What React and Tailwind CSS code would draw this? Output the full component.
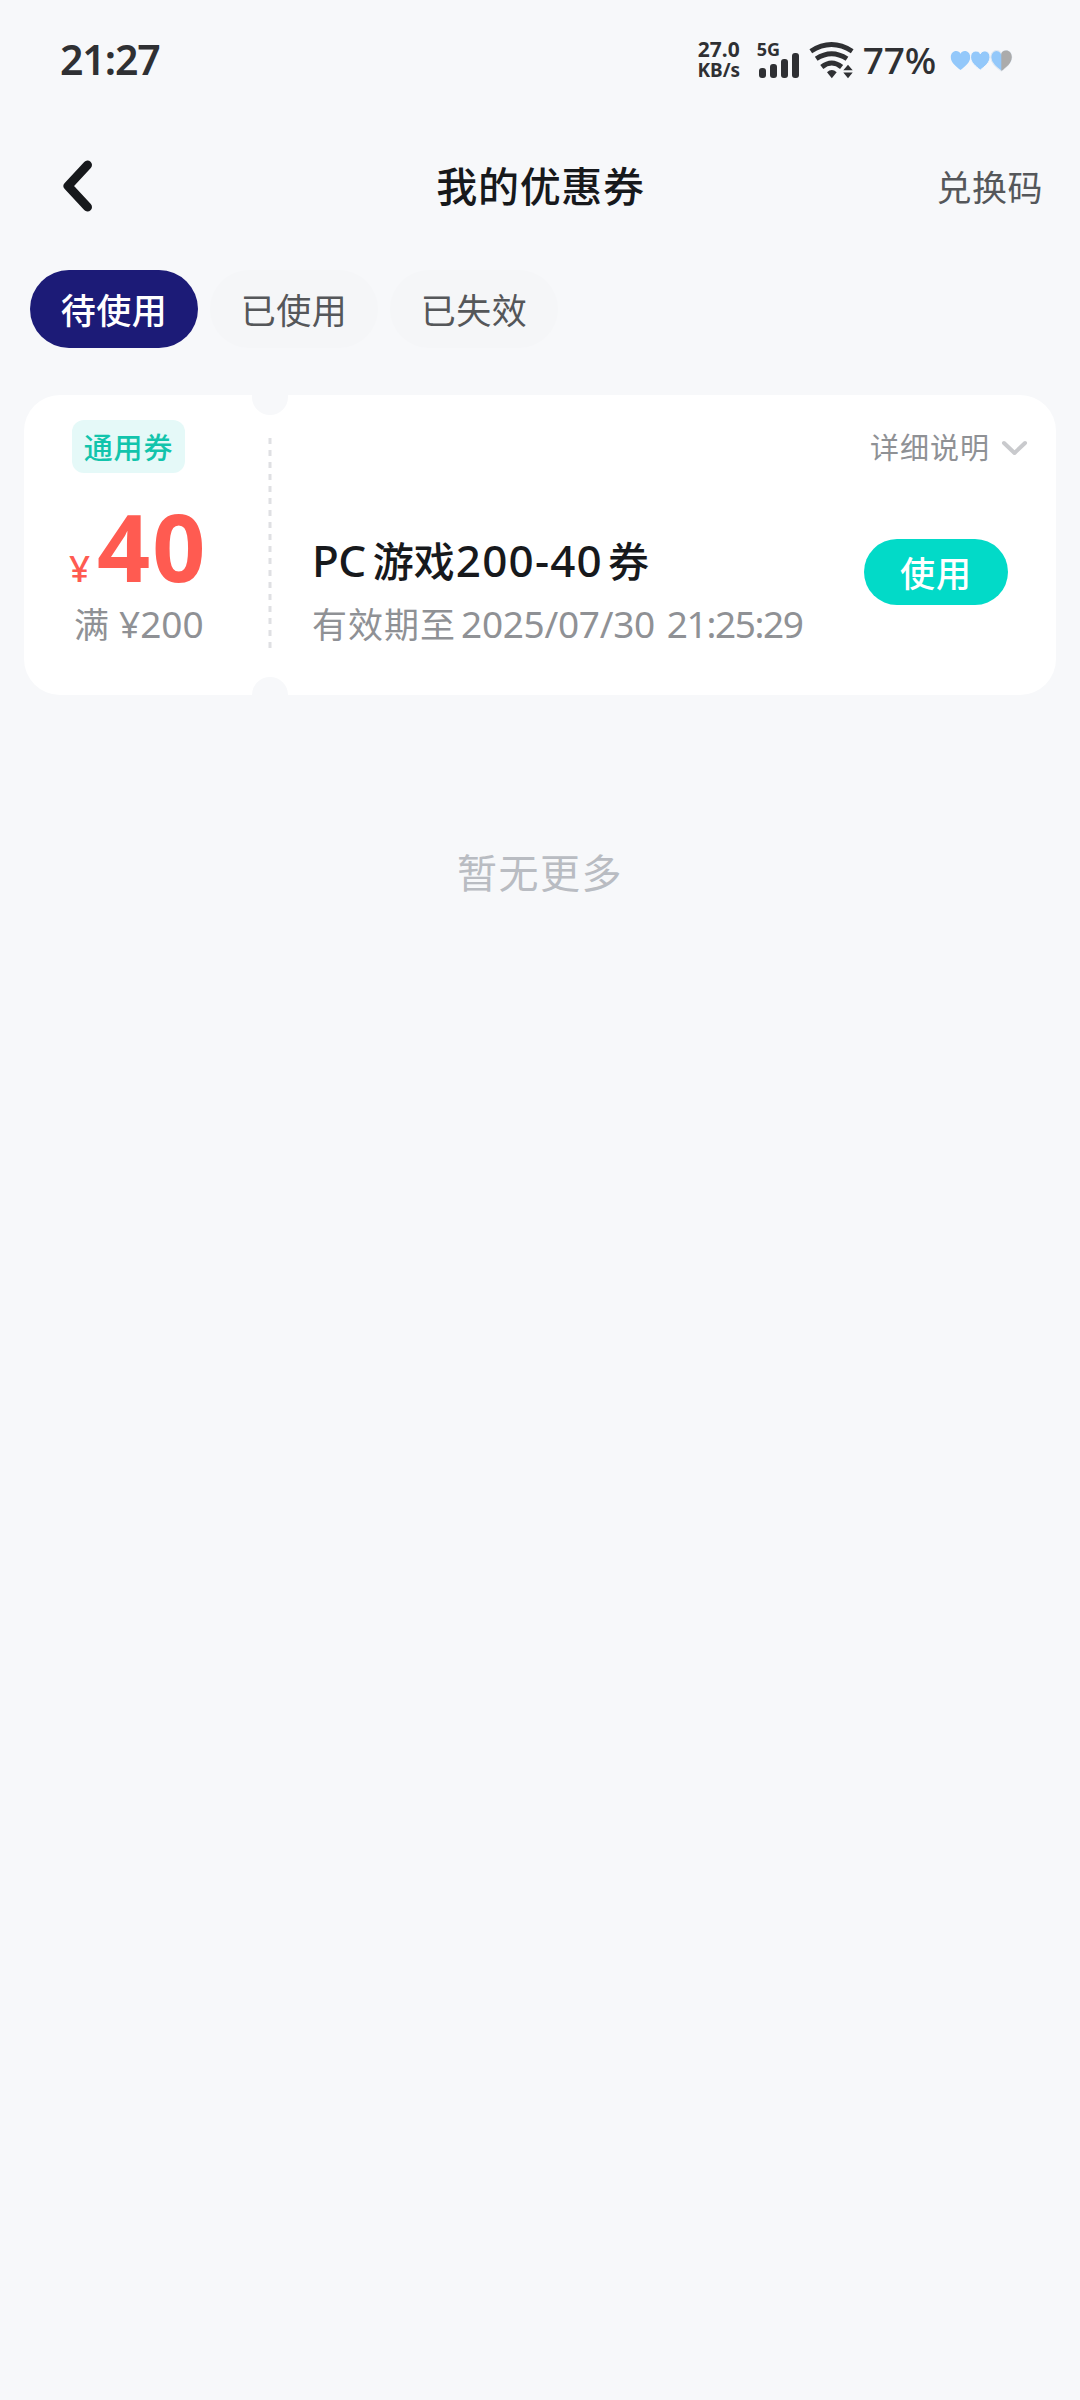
import React from "react";

const tabs = [
  { id: "unused", label: "待使用" },
  { id: "used", label: "已使用" },
  { id: "expired", label: "已失效" },
];

const HEART = "M10 20C5.500 16.500 .3 12.500 .3 7.200C.3 3.500 2.700 1 5.700 1C7.600 1 9.200 2 10 3.800C10.800 2 12.400 1 14.300 1C17.300 1 19.700 3.500 19.700 7.200C19.700 12.500 14.500 16.500 10 20Z";

const StatusBar = () => (
  <div className="flex h-[120px] items-center pl-[60px] pr-[66px] text-[#2f3033]">
    <span className="pb-px text-[41px] leading-none font-semibold tracking-[-1.100px]">21:27</span>
    <div className="ml-auto flex items-center">
      <div className="mb-px flex w-[46px] flex-col items-center font-bold leading-none">
        <span className="text-[21px] leading-[21px]">27.0</span>
        <span className="text-[19px] leading-[21px]">KB/s</span>
      </div>
      <div className="mb-[2px] ml-[15px] flex h-[38px] w-[44px] flex-col justify-between">
        <span className="text-[18px] leading-[18px] font-bold">5G</span>
        <svg className="-mt-[6px] h-[26px] w-[44px]" viewBox="0 0 44 26" fill="currentColor">
          <rect x="2" y="16" width="7" height="10" rx="3" />
          <rect x="13" y="12" width="7" height="14" rx="3" />
          <rect x="24" y="7" width="7" height="19" rx="3" />
          <rect x="35" y="1" width="7" height="25" rx="3" />
        </svg>
      </div>
      <svg className="ml-[8px] h-[38px] w-[46px]" viewBox="0 0 46 38" fill="none" stroke="currentColor" strokeWidth="4.900">
        <path d="M1.800 10.200Q22.500 -3.200 43.200 10.200" />
        <path d="M7.200 17.800Q22.600 7.600 38 17.800" />
        <path d="M12.800 26Q22.700 18 32.600 26" />
        <path d="M18 31.200Q22.800 27 27.700 31.200L22.800 37.200Z" fill="currentColor" stroke="none" />
        <path d="M34.300 29.200L39 23.700L43.700 29.200ZM34.300 31.400L39 37.200L43.700 31.400Z" fill="currentColor" stroke="none" />
      </svg>
      <span className="ml-[8px] pb-[2px] text-[37px] leading-none font-medium tracking-[-0.200px]">77%</span>
      <svg className="mt-[2px] ml-[14px] h-[24px] w-[64px]" viewBox="0 0 64 24">
        <g transform="translate(.5 1)" fill="#93c8fa">
          <path d={HEART} />
          <path d={HEART} transform="translate(19.8 0)" stroke="#f7f8fa" strokeWidth="1" />
          <g transform="translate(40 -.5) scale(1.08)">
            <path d={HEART} stroke="#e4eaf1" strokeWidth="1" />
            <path d="M10 20V3.800C10.800 2 12.400 1 14.300 1C17.300 1 19.700 3.500 19.700 7.200C19.700 12.500 14.500 16.500 10 20Z" fill="#ababab" />
          </g>
        </g>
      </svg>
    </div>
  </div>
);

const Header = () => (
  <div className="grid h-[132px] grid-cols-3 items-center pl-[60px] pr-[37px] text-[#17191c]">
    <svg className="h-[56px] w-[36px]" viewBox="0 0 36 56" fill="none" stroke="currentColor" strokeWidth="9" strokeLinecap="round" strokeLinejoin="round">
      <path d="M27.500 7L8 28L27.500 49" />
    </svg>
    <h1 className="-ml-[22px] text-center text-[41px] leading-none font-medium tracking-[0.700px] whitespace-nowrap">我的优惠券</h1>
    <button className="pt-[3px] text-right text-[35px] leading-none tracking-[0.500px] text-[#55575a]">兑换码</button>
  </div>
);

const Tabs = ({ active }) => (
  <div className="mt-[18px] flex gap-3 pl-[30px]">
    {tabs.map((tab) => (
      <button
        key={tab.id}
        className={
          tab.id === active
            ? "h-[78px] w-[168px] rounded-full bg-[#1c1b77] pt-[2px] text-[35px] leading-none font-medium tracking-[0.500px] text-white"
            : "h-[78px] w-[168px] rounded-full bg-[#f5f6f8] pt-[2px] text-[35px] leading-none tracking-[0.500px] text-[#55575a]"
        }
      >
        {tab.label}
      </button>
    ))}
  </div>
);

const Coupon = () => (
  <div className="relative mx-6 mt-[47px] flex h-[300px] rounded-[36px] bg-white">
    {/* ticket notches */}
    <div className="absolute left-[228px] top-0 h-5 w-9 rounded-b-full bg-[#f7f8fa]" />
    <div className="absolute bottom-0 left-[228px] h-[18px] w-9 rounded-t-full bg-[#f7f8fa]" />

    <div className="flex w-[244px] flex-col pl-[45px] pt-[25px]">
      <span className="ml-[3px] flex h-[53px] w-[113px] items-center justify-center rounded-[12px] bg-[#e5f9f8] pt-[2px] text-[29px] leading-none font-medium tracking-[0.800px] text-[#12c4ac]">通用券</span>
      <div className="mt-[33px] flex h-[80px] items-baseline text-[#ff5b51]">
        <span className="w-[28px] text-[37px] leading-none font-medium tracking-[-1px]">¥</span>
        <span className="text-[93px] leading-[80px] font-bold tracking-[2px]">40</span>
      </div>
      <div className="mt-[19px] flex items-baseline pl-[5px] text-[35px] leading-none text-[#8f9195]">
        <span>满</span>
        <span className="ml-[10px] text-[37px] leading-none">¥200</span>
      </div>
    </div>

    <svg className="mt-[43px] h-[212px] w-1" viewBox="0 0 4 212">
      <path d="M2 0V212" stroke="#dfe0e3" strokeWidth="3" strokeDasharray="6 6" />
    </svg>

    <div className="flex flex-1 flex-col pl-[40px] pt-[38px]">
      <button className="flex items-center self-end pr-[28px] text-[29px] leading-none tracking-[1px] text-[#8f9195]">
        详细说明
        <svg className="ml-[11px] h-[18px] w-[27px]" viewBox="0 0 27 18" fill="none" stroke="#c9cacd" strokeWidth="4" strokeLinecap="round" strokeLinejoin="round">
          <path d="M3 4L13.500 14L24 4" />
        </svg>
      </button>
      <div className="mt-[67px] flex justify-between pr-12">
        <div className="pt-[10px] whitespace-nowrap">
          <h2 className="flex items-baseline text-[41px] leading-[42px] font-medium text-[#17191c]">
            <span className="text-[44px] leading-[42px] tracking-[-0.500px]">PC</span>
            <span className="ml-[7px]">游戏</span>
            <span className="ml-[1px] text-[44px] leading-[42px] tracking-[1.200px]">200-40</span>
            <span className="ml-[5px]">券</span>
          </h2>
          <p className="mt-[24px] flex items-baseline text-[35px] leading-[36px] text-[#8f9195]">
            <span className="tracking-[1px]">有效期至</span>
            <span className="ml-[5px] flex gap-[12px] text-[37px] leading-[36px]">
              <span className="tracking-[-0.300px]">2025/07/30</span>
              <span className="tracking-[-1.400px]">21:25:29</span>
            </span>
          </p>
        </div>
        <button className="mt-[10px] h-[66px] w-[144px] rounded-full bg-[#02dac8] pt-[2px] text-[35px] leading-none font-medium tracking-[1px] text-white">使用</button>
      </div>
    </div>
  </div>
);

const App = () => (
  <div className="min-h-[2400px] w-[1080px] overflow-hidden bg-[#f7f8fa] font-['Noto_Sans','Noto_Sans_CJK_SC',sans-serif]">
    <StatusBar />
    <Header />
    <Tabs active="unused" />
    <Coupon />
    <p className="mt-[158px] text-center text-[40px] leading-none tracking-[1.500px] text-[#b9bcc2]">暂无更多</p>
  </div>
);

export default App;
